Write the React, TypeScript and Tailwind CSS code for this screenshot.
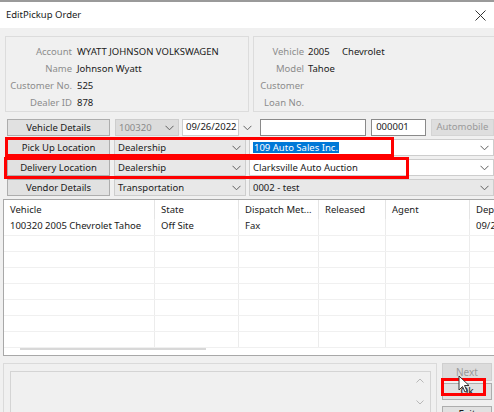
import React from 'react';

const font = { fontFamily: '"Noto Sans", "Open Sans", sans-serif' };

function Chevron({ className = '' }: { className?: string }) {
  return (
    <svg width='9' height='6' viewBox='0 0 9 6' className={className}>
      <path d='M0.5 0.8 L4.5 4.8 L8.5 0.8' fill='none' stroke='#606060' strokeWidth='1' />
    </svg>
  );
}

function WinButton({ label, w = 'w-[103px]', disabled = false }: { label: string; w?: string; disabled?: boolean }) {
  return (
    <div
      className={`${w} flex h-[17px] shrink-0 items-center justify-center whitespace-nowrap border border-[#adadad] bg-[#e1e1e1] leading-none ${
        disabled ? 'text-[#a0a0a0] border-[#cfcfcf] bg-[#e6e6e6]' : 'text-[#1a1a1a]'
      }`}
    >
      {label}
    </div>
  );
}

function Combo({ value, w, bg = 'bg-[#e8e8e8]', children }: { value?: string; w: string; bg?: string; children?: React.ReactNode }) {
  return (
    <div className={`${w} ${bg} flex h-[17px] shrink-0 items-center justify-between whitespace-nowrap border border-[#cdcdcd] pl-[3px] pr-[4px] leading-none text-[#1a1a1a]`}>
      {children ?? <span>{value}</span>}
      <Chevron />
    </div>
  );
}

const columns = [
  { name: 'Vehicle', w: 'w-[151px]', val: '100320 2005 Chevrolet Tahoe' },
  { name: 'State', w: 'w-[84px]', val: 'Off Site' },
  { name: 'Dispatch Met...', w: 'w-[80px]', val: 'Fax' },
  { name: 'Released', w: 'w-[67px]', val: '' },
  { name: 'Agent', w: 'w-[84px]', val: '' },
  { name: 'Dep', w: 'w-[30px]', val: '09/2' },
];

export default function App() {
  return (
    <div style={font} className='relative h-[412px] w-[494px] overflow-hidden bg-[#f0f0f0] text-[9.5px] text-[#1a1a1a]'>
      {/* title bar */}
      <div className='flex h-[28px] items-center justify-between border-t-2 border-[#9a9a9a] bg-white pl-[6px] pr-[6px]'>
        <span>EditPickup Order</span>
        <svg width='11' height='11' viewBox='0 0 11 11' className='mr-[2px]'>
          <path d='M0.5 0.5 L10.5 10.5 M10.5 0.5 L0.5 10.5' stroke='#333' strokeWidth='1' />
        </svg>
      </div>

      {/* customer / vehicle info */}
      <div className='mt-[8px] flex gap-[4px] pl-[5px]'>
        <div className='h-[76px] w-[244px] border border-[#dcdcdc] pt-[7px]'>
          {[
            ['Account', 'WYATT JOHNSON VOLKSWAGEN'],
            ['Name', 'Johnson Wyatt'],
            ['Customer No.', '525'],
            ['Dealer ID', '878'],
          ].map(([l, v]) => (
            <div key={l} className='flex h-[17px] items-center whitespace-nowrap'>
              <span className='w-[67px] pr-[1px] text-right text-[#8c8c8c]'>{l}</span>
              <span className='pl-[4px]'>{v}</span>
            </div>
          ))}
        </div>
        <div className='h-[76px] flex-1 border border-r-0 border-[#dcdcdc] pt-[7px]'>
          {[
            ['Vehicle', '2005', 'Chevrolet'],
            ['Model', 'Tahoe', ''],
            ['Customer', '', ''],
            ['Loan No.', '', ''],
          ].map(([l, v, v2]) => (
            <div key={l} className='flex h-[17px] items-center whitespace-nowrap'>
              <span className='w-[50px] text-right text-[#8c8c8c]'>{l}</span>
              <span className='w-[38px] pl-[4px]'>{v}</span>
              <span>{v2}</span>
            </div>
          ))}
        </div>
      </div>

      {/* form rows */}
      <div className='mt-[7px] flex flex-col gap-[3px] pl-[7px]'>
        <div className='flex items-center'>
          <WinButton label='Vehicle Details' />
          <Combo w='ml-[5px] w-[64px]' bg='bg-[#dcdcdc]'>
            <span className='text-[#8a8a8a]'>100320</span>
          </Combo>
          <div className='ml-[3px] flex h-[17px] w-[58px] items-center whitespace-nowrap border border-[#cdcdcd] bg-white pl-[3px]'>09/26/2022</div>
          <Chevron className='ml-[4px]' />
          <div className='ml-[8px] h-[17px] w-[107px] border border-[#8a8a8a] bg-white' />
          <div className='ml-[5px] flex h-[17px] w-[55px] items-center border border-[#8a8a8a] bg-white pl-[4px]'>000001</div>
          <div className='ml-[5px] flex h-[17px] w-[64px] items-center justify-center border border-[#d4d4d4] bg-[#dedede] text-[#9a9a9a]'>Automobile</div>
        </div>
        <div className='flex items-center'>
          <WinButton label='Pick Up Location' />
          <Combo w='ml-[4px] w-[132px]' value='Dealership' />
          <Combo w='ml-[3px] flex-1' bg='bg-white'>
            <span className='bg-[#0078d7] px-[1px] py-[1px] text-white'>109 Auto Sales Inc.</span>
          </Combo>
        </div>
        <div className='flex items-center'>
          <WinButton label='Delivery Location' />
          <Combo w='ml-[4px] w-[132px]' value='Dealership' />
          <Combo w='ml-[3px] flex-1' bg='bg-white' value='Clarksville Auto Auction' />
        </div>
        <div className='flex items-center'>
          <WinButton label='Vendor Details' />
          <Combo w='ml-[4px] w-[132px]' value='Transportation' />
          <Combo w='ml-[3px] flex-1' value='0002 - test' />
        </div>
      </div>

      {/* vehicle list */}
      <div className='ml-[3px] mt-[3px] h-[157px] border border-r-0 border-[#a8a8a8] bg-white'>
        <div className='flex h-[19px] items-center'>
          {columns.map((c) => (
            <div key={c.name} className={`${c.w} h-full shrink-0 overflow-hidden whitespace-nowrap border-r border-[#e4e4e4] pl-[6px] pt-[3px]`}>
              {c.name}
            </div>
          ))}
        </div>
        <div className='flex h-[17px] border-b border-[#f0f0f0]'>
          {columns.map((c) => (
            <div key={c.name} className={`${c.w} shrink-0 overflow-hidden whitespace-nowrap border-r border-[#ececec] pl-[6px]`}>
              {c.val}
            </div>
          ))}
        </div>
        {Array.from({ length: 7 }).map((_, i) => (
          <div key={i} className='flex h-[16px] border-b border-[#f0f0f0]'>
            {columns.map((c) => (
              <div key={c.name} className={`${c.w} shrink-0 border-r border-[#ececec]`} />
            ))}
          </div>
        ))}
        <div className='ml-[16px] h-[2px] w-[186px] bg-[#d8d8d8]' />
      </div>

      {/* bottom */}
      <div className='mt-[7px] flex gap-[5px] pl-[3px]'>
        <div className='h-[60px] w-[434px] border border-[#dadada] pl-[6px] pt-[7px]'>
          <div className='flex h-[60px] w-[421px] justify-end border border-[#d4d4d4] pr-[6px] pt-[6px]'>
            <div className='flex flex-col gap-[17px]'>
              <svg width='8' height='5' viewBox='0 0 8 5'>
                <path d='M0.5 4.5 L4 1 L7.5 4.5' fill='none' stroke='#b8b8b8' />
              </svg>
              <svg width='8' height='5' viewBox='0 0 8 5'>
                <path d='M0.5 0.5 L4 4 L7.5 0.5' fill='none' stroke='#b8b8b8' />
              </svg>
            </div>
          </div>
        </div>
        <div className='flex flex-col gap-[2px] text-[10px]'>
          <div className='flex h-[18px] w-[50px] items-center justify-center border border-[#cfcfcf] bg-[#dcdcdc] text-[#9a9a9a]'>Next</div>
          <div className='flex h-[17px] w-[50px] items-center justify-center border border-[#adadad] bg-[#e1e1e1]'>Ok</div>
          <div className='mt-[4px] flex h-[17px] w-[50px] items-center justify-center border border-[#adadad] bg-[#e1e1e1]'>Exit</div>
        </div>
      </div>

      {/* red annotation boxes */}
      <div className='pointer-events-none absolute left-[5px] top-[137px] h-[20px] w-[389px] border-[3px] border-[#ff0000]' />
      <div className='pointer-events-none absolute left-[4px] top-[157px] h-[22px] w-[405px] border-[3px] border-[#ff0000]' />
      <div className='pointer-events-none absolute left-[441px] top-[378px] h-[18px] w-[45px] border-[3px] border-[#ff0000]' />

      {/* mouse cursor */}
      <svg className='pointer-events-none absolute left-[458px] top-[375px]' width='12' height='18' viewBox='0 0 12 18'>
        <path d='M1 1 L1 15 L4.5 11.5 L7 17 L9 16 L6.5 10.5 L11 10.5 Z' fill='white' stroke='#333' strokeWidth='1' />
      </svg>
    </div>
  );
}
